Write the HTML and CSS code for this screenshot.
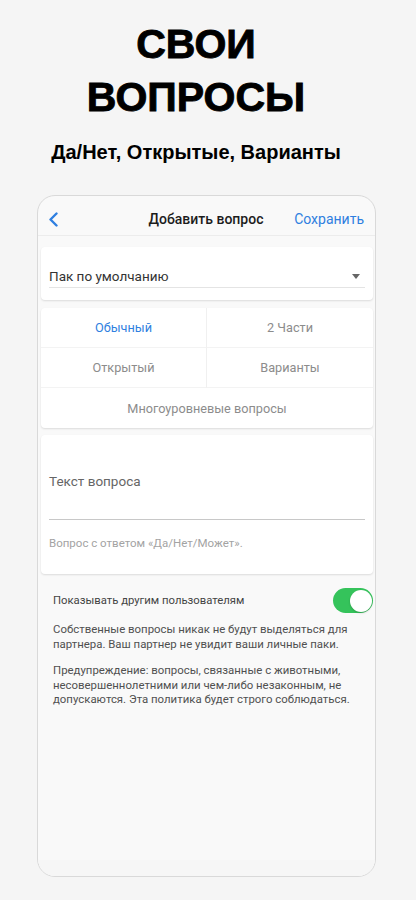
FILE: index.html
```html
<!DOCTYPE html>
<html lang="ru">
  <head>
    <meta charset="utf-8" />
    <meta name="viewport" content="width=device-width, initial-scale=1" />
    <title>Свои вопросы</title>
    <link rel="stylesheet" href="styles.css">
  </head>
  <body>
    <!-- 1. заголовок -->
    <div class="hero">
      <h1 class="title">СВОИ<br />ВОПРОСЫ</h1>
      <p class="subtitle">Да/Нет, Открытые, Варианты</p>
    </div>

    <!-- 2. телефон -->
    <div class="phone">
      <div class="navbar">
        <span class="back">
          <svg width="11" height="15" viewBox="0 0 11 15">
            <polyline points="8.5,1.5 2.5,7.5 8.5,13.5" fill="none" stroke="#2f7fe0" stroke-width="2.4" stroke-linecap="round" stroke-linejoin="round" />
          </svg>
        </span>
        <span class="nav-title">Добавить вопрос</span>
        <span class="nav-save">Сохранить</span>
      </div>

      <div class="card pack">
        <div class="pack-field">
          <span>Пак по умолчанию</span>
          <span class="caret"></span>
        </div>
      </div>

      <div class="card types">
        <div class="type active">Обычный</div>
        <div class="type">2 Части</div>
        <div class="type">Открытый</div>
        <div class="type">Варианты</div>
        <div class="type wide">Многоуровневые вопросы</div>
      </div>

      <div class="card question">
        <div class="question-field">Текст вопроса</div>
        <div class="question-hint">Вопрос с ответом «Да/Нет/Может».</div>
      </div>

      <div class="share-row">
        <span>Показывать другим пользователям</span>
        <span class="toggle"><span class="knob"></span></span>
      </div>

      <p class="note">Собственные вопросы никак не будут выделяться для партнера. Ваш партнер не увидит ваши личные паки.</p>
      <p class="note">Предупреждение: вопросы, связанные с животными, несовершеннолетними или чем-либо незаконным, не допускаются. Эта политика будет строго соблюдаться.</p>

      <div class="spacer"></div>
      <div class="home-area"></div>
    </div>
  </body>
</html>
```

FILE: styles.css
```css
/* 0. общие */
body {
  margin: 0;
  padding: 0;
  background-color: #f5f5f5;
  font-family: "Liberation Sans", Arial, sans-serif;
  color: #222;
}

/* 1. заголовок (чуть левее центра, как на макете) */
.hero {
  padding: 18px 24px 0 0;
  text-align: center;
}
.title {
  margin: 0;
  font-size: 41px;
  line-height: 53px;
  font-weight: 700;
  color: #000;
  -webkit-text-stroke: 0.9px #000;
}
.subtitle {
  margin: 16px 0 0 0;
  font-size: 20px;
  line-height: 24px;
  font-weight: 700;
  color: #000;
}

/* 2. телефон */
.phone {
  margin: 31px 0 0 37px;
  width: 337px;
  height: 680px;
  border: 1.5px solid #d9d9d9;
  border-radius: 18px;
  background-color: #f9f9f9;
  display: flex;
  flex-direction: column;
  overflow: hidden;
  font-family: Roboto, "Liberation Sans", sans-serif;
}

.navbar {
  height: 40px;
  box-sizing: border-box;
  padding: 7px 11px 0 10px;
  display: flex;
  align-items: center;
  border-bottom: 1px solid #ececec;
}
.back {
  width: 75px;
  display: flex;
  align-items: center;
}
.nav-title {
  flex: 1;
  text-align: center;
  font-size: 14px;
  font-weight: 500;
  color: #1c1c1c;
}
.nav-save {
  width: 75px;
  text-align: right;
  font-size: 14px;
  color: #2f7fe0;
}

.card {
  margin: 0 2px 0 3px;
  background-color: #fff;
  border-radius: 4px;
  box-shadow: 0 1px 2px rgba(0, 0, 0, 0.12);
}

/* 2.1 пак */
.pack {
  margin-top: 11px;
  height: 53px;
  padding: 0 8px;
  box-sizing: border-box;
  display: flex;
  align-items: flex-end;
}
.pack-field {
  flex: 1;
  display: flex;
  align-items: center;
  justify-content: space-between;
  height: 22px;
  margin-bottom: 12px;
  border-bottom: 1px solid #e4e4e4;
  font-size: 13.5px;
  color: #333;
}
.caret {
  width: 0;
  height: 0;
  margin-right: 5px;
  border-left: 4.5px solid transparent;
  border-right: 4.5px solid transparent;
  border-top: 5px solid #666;
}

/* 2.2 типы */
.types {
  margin-top: 8px;
  display: grid;
  grid-template-columns: 1fr 1fr;
  grid-auto-rows: 40px;
}
.type {
  display: flex;
  align-items: center;
  justify-content: center;
  font-size: 12.7px;
  color: #8c8c8c;
  border-bottom: 1px solid #f3f3f3;
}
.type:nth-child(odd) {
  border-right: 1px solid #f0f0f0;
}
.type.active {
  color: #2f7fe0;
}
.type.wide {
  grid-column: span 2;
  border-right: none;
  border-bottom: none;
}

/* 2.3 вопрос */
.question {
  margin-top: 7px;
  height: 139px;
  padding: 0 8px;
  box-sizing: border-box;
}
.question-field {
  margin-top: 37px;
  height: 48px;
  padding-top: 1px;
  box-sizing: border-box;
  border-bottom: 1.5px solid #c8c8c8;
  font-size: 13.5px;
  color: #666;
}
.question-hint {
  margin-top: 16px;
  font-size: 11.5px;
  color: #a3a3a3;
}

/* 2.4 переключатель */
.share-row {
  margin: 14px 2px 0 15px;
  display: flex;
  align-items: center;
  justify-content: space-between;
  font-size: 11.3px;
  color: #444;
}
.toggle {
  position: relative;
  width: 40px;
  height: 25px;
  border-radius: 13px;
  background-color: #35c35b;
}
.knob {
  position: absolute;
  top: 1.5px;
  right: 1.5px;
  width: 22px;
  height: 22px;
  border-radius: 50%;
  background-color: #fff;
  box-shadow: 0 1px 2px rgba(0, 0, 0, 0.2);
}

.note {
  margin: 9px 8px 0 15px;
  font-size: 11.4px;
  line-height: 14.5px;
  color: #505050;
}
.note + .note {
  margin-top: 12px;
}

.spacer {
  flex: 1;
}
.home-area {
  height: 16px;
  background-color: #f6f6f6;
}
```
